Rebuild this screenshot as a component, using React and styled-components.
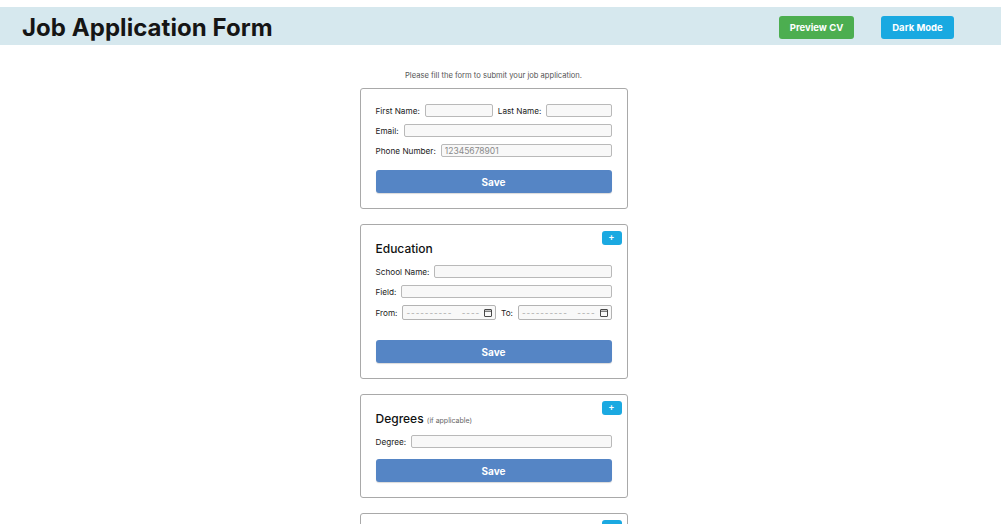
import { createGlobalStyle, styled } from "styled-components";

const Global = createGlobalStyle`
    body {
        margin: 0;
        padding-top: 7px;
        background: #fff;
        font-family: Inter, "Liberation Sans", sans-serif;
        color: #111;
    }
`;

const Header = styled.header`
    box-sizing: border-box;
    display: flex;
    align-items: center;
    gap: 27px;
    height: 38px;
    padding: 3px 47px 0 22px;
    background: #d6e8ee;
`;

const Title = styled.h1`
    margin: 0 auto 0 0;
    font-size: 24px;
    font-weight: 700;
    letter-spacing: 0.05px;
    color: #151515;
`;

const HeaderButton = styled.button`
    height: 23px;
    width: ${({ $w }) => $w}px;
    border: none;
    border-radius: 3px;
    background: ${({ $bg }) => $bg};
    color: #fff;
    font-family: inherit;
    font-size: 9.5px;
    font-weight: 700;
    padding: 0;
`;

const Main = styled.main`
    display: flex;
    flex-direction: column;
    align-items: center;
    padding-right: 14px;
`;

const Intro = styled.p`
    margin: 26px 0 8px;
    font-size: 7.6px;
    color: #555;
`;

const Cards = styled.div`
    display: flex;
    flex-direction: column;
    gap: 15px;
    width: 268px;
`;

const Card = styled.form`
    position: relative;
    display: flex;
    flex-direction: column;
    gap: 7px;
    padding: 15px;
    border: 1px solid #a9a9a9;
    border-radius: 3px;
    background: #fff;
`;

const AddButton = styled.button`
    position: absolute;
    top: 6px;
    right: 5px;
    width: 20px;
    height: 14px;
    padding: 0;
    border: none;
    border-radius: 3px;
    background: #1ba9e1;
    color: #fff;
    font-size: 9px;
    font-weight: 700;
    line-height: 14px;
`;

const Heading = styled.h2`
    margin: 0;
    height: 18px;
    line-height: 18px;
    font-size: 12px;
    font-weight: 500;
    color: #111;
`;

const Small = styled.span`
    font-size: 7px;
    font-weight: 400;
    color: #666;
`;

const Row = styled.div`
    display: flex;
    align-items: center;
    height: ${({ $h = 13 }) => $h}px;
    font-size: 8.2px;
    color: #222;
`;

const Label = styled.label`
    margin-right: 5px;
    white-space: nowrap;
`;

const Input = styled.input`
    box-sizing: border-box;
    height: 13px;
    flex: ${({ $w }) => ($w ? "none" : "1")};
    width: ${({ $w }) => ($w ? `${$w}px` : "auto")};
    min-width: 0;
    margin-right: ${({ $mr = 0 }) => $mr}px;
    padding: 0 3px;
    border: 1px solid #b9b9b9;
    border-radius: 2px;
    background: #f8f8f8;
    font-family: inherit;
    font-size: 8.5px;
    &::placeholder {
        color: #8a8a8a;
    }
`;

const DateBox = styled.div`
    box-sizing: border-box;
    display: flex;
    align-items: center;
    height: 15px;
    width: 95px;
    margin-right: ${({ $mr = 0 }) => $mr}px;
    padding: 0 3px;
    border: 1px solid #b3b3b3;
    border-radius: 2px;
    background: #f8f8f8;
    color: #a4a4a4;
    font-size: 8px;
    letter-spacing: 0.9px;
    white-space: pre;
    svg {
        margin-left: auto;
    }
`;

const Save = styled.button`
    height: 23px;
    margin-top: ${({ $mt = 4 }) => $mt}px;
    border: none;
    border-radius: 3px;
    background: #5585c5;
    color: #fff;
    font-family: inherit;
    font-size: 10px;
    font-weight: 700;
    box-shadow: 0 1px 1px rgba(0, 0, 0, 0.15);
`;

function Calendar() {
    return (
        <svg width="8" height="8" viewBox="0 0 8 8" fill="none" stroke="#333" strokeWidth="0.9">
            <rect x="0.5" y="0.5" width="7" height="7" rx="0.5" />
            <line x1="0.5" y1="2.2" x2="7.5" y2="2.2" />
        </svg>
    );
}

function DateField({ mr }) {
    return (
        <DateBox $mr={mr}>
            <span>{"----------   ----"}</span>
            <Calendar />
        </DateBox>
    );
}

export default function App() {
    return (
        <>
            <Global />
            <Header>
                <Title>Job Application Form</Title>
                <HeaderButton $w={75} $bg="#4cae50">Preview CV</HeaderButton>
                <HeaderButton $w={73} $bg="#19a9e1">Dark Mode</HeaderButton>
            </Header>
            <Main>
                <Intro>Please fill the form to submit your job application.</Intro>
                <Cards>
                    <Card onSubmit={e => e.preventDefault()}>
                        <Row>
                            <Label>First Name:</Label>
                            <Input $w={68} $mr={5} />
                            <Label>Last Name:</Label>
                            <Input />
                        </Row>
                        <Row>
                            <Label>Email:</Label>
                            <Input />
                        </Row>
                        <Row>
                            <Label>Phone Number:</Label>
                            <Input placeholder="12345678901" />
                        </Row>
                        <Save $mt={6}>Save</Save>
                    </Card>

                    <Card onSubmit={e => e.preventDefault()}>
                        <AddButton type="button">+</AddButton>
                        <Heading>Education</Heading>
                        <Row>
                            <Label>School Name:</Label>
                            <Input />
                        </Row>
                        <Row>
                            <Label>Field:</Label>
                            <Input />
                        </Row>
                        <Row $h={15}>
                            <Label>From:</Label>
                            <DateField mr={5} />
                            <Label>To:</Label>
                            <DateField />
                        </Row>
                        <Save $mt={13}>Save</Save>
                    </Card>

                    <Card onSubmit={e => e.preventDefault()}>
                        <AddButton type="button">+</AddButton>
                        <Heading>
                            Degrees <Small>(if applicable)</Small>
                        </Heading>
                        <Row>
                            <Label>Degree:</Label>
                            <Input />
                        </Row>
                        <Save $mt={4}>Save</Save>
                    </Card>

                    <Card onSubmit={e => e.preventDefault()}>
                        <AddButton type="button">+</AddButton>
                        <Heading>Experience</Heading>
                        <Row>
                            <Label>Company Name:</Label>
                            <Input />
                        </Row>
                        <Row>
                            <Label>Position:</Label>
                            <Input />
                        </Row>
                        <Save $mt={4}>Save</Save>
                    </Card>
                </Cards>
            </Main>
        </>
    );
}
